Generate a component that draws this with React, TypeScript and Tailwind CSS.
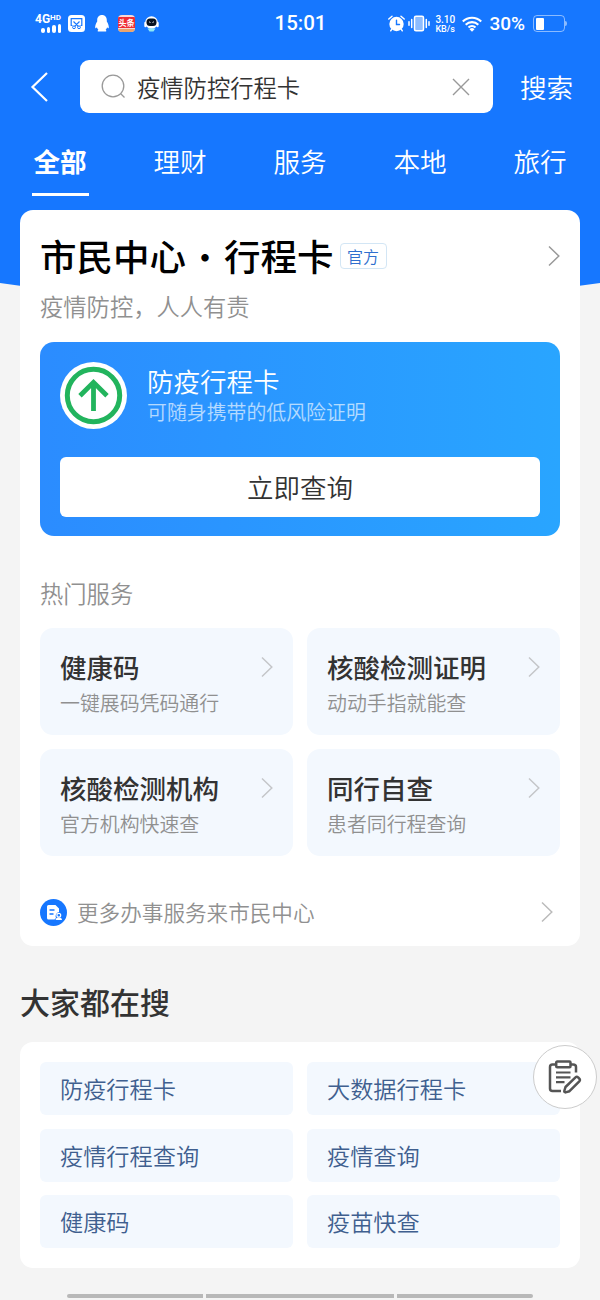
import { clsx } from 'clsx'

const tabs = ['全部', '理财', '服务', '本地', '旅行']

const services = [
  { title: '健康码', desc: '一键展码凭码通行' },
  { title: '核酸检测证明', desc: '动动手指就能查' },
  { title: '核酸检测机构', desc: '官方机构快速查' },
  { title: '同行自查', desc: '患者同行程查询' },
]

const searches = ['防疫行程卡', '大数据行程卡', '疫情行程查询', '疫情查询', '健康码', '疫苗快查']

function Chevron({ className }: { className?: string }) {
  return (
    <svg viewBox="0 0 12 22" className={clsx('h-[22px] w-3 shrink-0', className)} fill="none" stroke="currentColor" strokeWidth="1.5">
      <path d="M1 1.5 10.8 11 1 20.5" />
    </svg>
  )
}

function StatusBar() {
  return (
    <div className="flex h-[47px] items-center justify-between pl-[34px] pr-[33px]">
      <div className="flex w-[220px] items-center">
        <div className="flex w-[28px] flex-col font-['Roboto'] font-bold">
          <div className="flex h-[9px] items-start pl-px">
            <span className="text-[12px] leading-[9px]">4G</span>
            <span className="text-[8px] leading-[6px]">HD</span>
          </div>
          <div className="flex h-[9px] items-end justify-end gap-[2px] pr-[1px]">
            <i className="h-[5px] w-[3.500px] rounded-full bg-white" />
            <i className="h-[6px] w-[3.500px] rounded-full bg-white" />
            <i className="h-[8px] w-[3.500px] rounded-full bg-white" />
            <i className="h-[9px] w-[3.500px] rounded-full bg-white" />
          </div>
        </div>
        {/* screenshot */}
        <svg viewBox="0 0 17 17" className="ml-[6px] size-[17px]" fill="none">
          <rect width="17" height="17" rx="3.5" fill="#fff" />
          <path d="M4.500 10.500H3.200V3.700h10.600v6.800H12.500M5.500 6.500l4.800 4.800M11.500 6.500l-4.800 4.800" stroke="#1677ff" strokeWidth="1.200" />
          <circle cx="6" cy="12.300" r="1.400" stroke="#1677ff" />
          <circle cx="11" cy="12.300" r="1.400" stroke="#1677ff" />
        </svg>
        {/* qq */}
        <svg viewBox="0 0 14 17" className="ml-[10px] h-[17px] w-[14px]" fill="#fff">
          <path d="M7 0C4 0 2.200 2.200 2.200 5v1.500C.8 8.700 0 10.700.2 12.700c.2 1 1 .5 1.700-.5.3 1.200.8 1.900 1.500 2.500-1 .5-1.100 1.900.3 1.900h6.600c1.400 0 1.300-1.400.3-1.900.7-.6 1.200-1.300 1.500-2.500.7 1 1.500 1.500 1.700.5.2-2-.6-4-2-6.200V5C11.800 2.200 10 0 7 0Z" />
        </svg>
        <div className="ml-[9px] flex h-[17px] w-[17px] flex-col justify-between overflow-hidden rounded-[4px] bg-[#f8d9d6] pt-[2px]">
          <span className="h-[11px] whitespace-nowrap bg-[#ee2d35] text-center text-[8px] font-bold leading-[11px]">头条</span>
          <span className="h-[3px] bg-[#eaa46d]" />
        </div>
        <svg viewBox="0 0 15 16" className="ml-[9px] h-[16px] w-[15px]">
          <path d="M1.500 7v3M13.500 7v3" stroke="#fff" strokeWidth="2.400" strokeLinecap="round" />
          <ellipse cx="7.500" cy="6.500" rx="6.300" ry="6.300" fill="#fff" />
          <rect x="2.500" y="2.500" width="10" height="7.500" rx="3.500" fill="#071321" />
          <path d="M5 6.500q.8-1.200 1.500 0M8.500 6.500q.8-1.200 1.500 0" stroke="#fff" strokeWidth=".9" fill="none" />
          <path d="M3.500 12.500h8L9.500 15.500h-4Z" fill="#8ee8f5" />
        </svg>
      </div>
      <span className="font-['Roboto'] text-[20.500px] font-medium leading-none">15:01</span>
      <div className="flex w-[220px] items-center justify-end font-['Roboto']">
        <svg viewBox="0 0 17 17" className="size-[17px]" fill="none" stroke="#fff" strokeLinecap="round">
          <circle cx="8.500" cy="9" r="7.200" fill="#fff" stroke="none" />
          <path d="M.8 4 4 1.300M16.200 4 13 1.300M3.800 14.200 2.700 15.800M13.200 14.200l1.100 1.600" strokeWidth="1.500" />
          <path d="M8.500 5.200v4.300h3" stroke="#1677ff" strokeWidth="1.400" />
        </svg>
        <svg viewBox="0 0 22 17" className="ml-[3px] h-[17px] w-[22px]" fill="none" stroke="#fff" strokeWidth="1.500" strokeLinecap="round">
          <rect x="6.500" y="1.200" width="9" height="14.600" rx="1.500" fill="#8dbcff" />
          <path d="M3.700 4.500v8M1 6.800v3.400M18.300 4.500v8M21 6.800v3.400" />
        </svg>
        <div className="ml-[5px] w-[22px] whitespace-nowrap text-[9px] font-medium">
          <p className="text-[10px] leading-[11px]">3.10</p>
          <p className="leading-[9px]">KB/s</p>
        </div>
        <svg viewBox="0 0 20 16" className="ml-[5px] h-[16px] w-[20px]" fill="none" stroke="#fff" strokeWidth="2.100">
          <path d="M.8 5.600a13 13 0 0 1 18.400 0M3.700 8.700a9 9 0 0 1 12.600 0M6.500 11.600a5 5 0 0 1 7 0" />
          <path d="m10 15.800-2.500-2.600a3.600 3.600 0 0 1 5 0Z" fill="#fff" stroke="none" />
        </svg>
        <span className="ml-[7px] text-[19px] font-medium leading-none">30%</span>
        <div className="ml-[8px] flex h-[17px] w-[32px] shrink-0 items-center rounded-[4px] border border-white/50 p-[2px]">
          <i className="h-[12px] w-[8px] rounded-[1px] bg-white" />
        </div>
        <i className="h-[5px] w-[2px] shrink-0 rounded-r bg-white/50" />
      </div>
    </div>
  )
}

function Header() {
  return (
    <header className="text-white">
      <div className="h-[283px] bg-[#1677ff]">
        <StatusBar />
        <div className="mt-[13px] flex h-[53px] items-center">
          <svg viewBox="0 0 18 30" className="ml-[30px] h-[30px] w-[18px]" fill="none" stroke="#fff" strokeWidth="2.200">
            <path d="M17 1 2.500 15 17 29" />
          </svg>
          <div className="ml-[32px] flex h-[53px] w-[413px] items-center rounded-[9px] bg-white pl-[21px] pr-[23px] text-[#333]">
            <svg viewBox="0 0 26 26" className="size-[26px]" fill="none" stroke="#999" strokeWidth="1.300">
              <circle cx="12" cy="12" r="10.800" />
              <path d="m19.500 19.500 4 4" />
            </svg>
            <span className="ml-[10px] flex-1 pt-[2px] text-[23.300px] leading-none">疫情防控行程卡</span>
            <svg viewBox="0 0 18 18" className="size-[18px]" fill="none" stroke="#999" strokeWidth="1.400">
              <path d="m1 1 16 16M17 1 1 17" />
            </svg>
          </div>
          <span className="ml-[27px] pt-px text-[26.600px] leading-none">搜索</span>
        </div>
        <nav className="flex h-[97px]">
          {tabs.map((tab, i) => (
            <div
              key={tab}
              className={clsx('flex w-[120px] shrink-0 flex-col items-center pt-[34px] text-[26.600px] leading-[28px]', i === 0 && 'font-bold')}
            >
              {tab}
              {i === 0 && <i className="mt-[18px] h-[3px] w-[57px] bg-white" />}
            </div>
          ))}
        </nav>
      </div>
      <svg viewBox="0 0 600 30" className="block h-[30px] w-full" fill="#1677ff">
        <path d="M0 0Q300 44 600 0Z" />
      </svg>
    </header>
  )
}

function TravelCard() {
  return (
    <div className="mt-[22px] h-[194px] rounded-[14px] bg-linear-to-r from-[#2b8cff] to-[#29a5ff] px-5 pt-5">
      <div className="flex h-[67px]">
        <svg viewBox="0 0 67 67" className="size-[67px]" fill="none" stroke="#22b45d">
          <circle cx="33.500" cy="33.500" r="33.500" fill="#fff" stroke="none" />
          <circle cx="33.500" cy="33.500" r="26.200" strokeWidth="5" />
          <path d="M33.500 49V20M20 33.800 33.500 20.300 47 33.800" strokeWidth="4.800" />
        </svg>
        <div className="ml-5 text-white">
          <p className="mt-[4px] text-[26.500px] leading-[30px]">防疫行程卡</p>
          <p className="mt-[4px] text-[19.900px] leading-[24px] text-white/65">可随身携带的低风险证明</p>
        </div>
      </div>
      <button className="mt-[28px] h-[60px] w-full rounded-[6px] bg-white text-[26.500px] leading-[60px] text-[#333]">立即查询</button>
    </div>
  )
}

function EditButton() {
  return (
    <button className="absolute left-[533px] top-[1045px] flex size-[64px] items-center justify-center rounded-full border border-[#ccc] bg-white">
      <svg viewBox="0 0 34 34" className="size-[34px]" fill="none" stroke="#555" strokeWidth="2.500" strokeLinejoin="round">
        <path d="M8 4.500H4.500Q2 4.500 2 7v21.500Q2 31 4.500 31H13M22.500 4.500H25q3 0 3 2.500v5.500" />
        <rect x="8.200" y="1.600" width="14.300" height="5.600" rx="1" />
        <path d="M8 12.500H22.500M8 17.300H22.500M8 22.200H16.500" strokeWidth="2.200" />
        <path d="m17.500 27 10-9.600q1.300-1.200 2.600 0l1.200 1.300q1.200 1.300 0 2.600L21.500 31.200l-4 1.200q-1.300 0-1.200-1.400Z" />
      </svg>
    </button>
  )
}

export default function App() {
  return (
    <div className="relative flex h-[1300px] w-[600px] flex-col overflow-hidden whitespace-nowrap bg-[#f4f4f4] font-['Noto_Sans_CJK_SC',sans-serif] font-[350] text-[#333]">
      <Header />
      <main className="relative -mt-[103px] px-5">
        <section className="h-[736px] rounded-[13px] bg-white px-5 pt-[24px]">
          <div className="flex h-[44px] items-center">
            <h1 className="flex items-center text-[36.500px] font-medium leading-none text-black">
              市民中心
              <span className="w-[38px] text-center text-[32px]">·</span>
              行程卡
            </h1>
            <span className="ml-[6px] flex h-[26px] w-[47px] items-center justify-center rounded-[4px] border border-[#d3e6f5] text-[16px] leading-none text-[#2f6fce]">
              官方
            </span>
            <Chevron className="ml-auto text-[#999]" />
          </div>
          <p className="mt-[14px] text-[23.300px] leading-[28px] text-[#909090]">疫情防控，人人有责</p>
          <TravelCard />
          <h2 className="mt-[43px] text-[23.300px] leading-[28px] font-[350] text-[#909090]">热门服务</h2>
          <div className="mt-[21px] grid grid-cols-2 gap-[14px]">
            {services.map((s) => (
              <div key={s.title} className="h-[107px] rounded-[13px] bg-[#f3f8fe] px-5 pt-[23px]">
                <div className="flex h-[32px] items-center justify-between">
                  <h3 className="text-[26.500px] font-medium leading-[32px]">{s.title}</h3>
                  <Chevron className="text-[#c4c6c9]" />
                </div>
                <p className="mt-[8px] text-[19.900px] leading-[24px] text-[#909090]">{s.desc}</p>
              </div>
            ))}
          </div>
          <div className="mt-[42px] flex h-[28px] items-center pr-[7px]">
            <svg viewBox="0 0 27 27" className="size-[27px]">
              <circle cx="13.500" cy="13.500" r="13.500" fill="#1677ff" />
              <path d="M8.500 6h7l3.500 3.500V13a4.200 4.200 0 0 0-3 6l-1.500 1.500h-6Q7 20.500 7 19V7.500Q7 6 8.500 6Z" fill="#fff" />
              <path d="M9.500 11h5M9.500 15h4" stroke="#1677ff" strokeWidth="1.300" />
              <circle cx="18.800" cy="16.300" r="1.900" fill="none" stroke="#fff" strokeWidth="1.200" />
              <path d="M15.500 21q.3-2.300 2.300-2.500h2q2 .2 2.300 2.500Z" fill="#fff" />
            </svg>
            <span className="ml-[10px] text-[21.600px] leading-none text-[#909090]">更多办事服务来市民中心</span>
            <Chevron className="ml-auto text-[#bbb]" />
          </div>
        </section>

        <h2 className="mt-[35px] text-[30px] font-medium leading-[40px]">大家都在搜</h2>
        <section className="mt-[21px] grid h-[226px] grid-cols-2 content-start gap-x-[14px] gap-y-[13.300px] rounded-[13px] bg-white p-5">
          {searches.map((word) => (
            <div key={word} className="h-[53.300px] rounded-[6px] bg-[#f3f8fe] px-5 text-[23.200px] leading-[53.300px] text-[#3f5f8f]">
              {word}
            </div>
          ))}
        </section>
      </main>
      <EditButton />
      <div className="mt-auto flex justify-center gap-[3px] pb-[2px]">
        <i className="h-[4px] w-[136px] rounded-l-full bg-[#b8b8b8]" />
        <i className="h-[4px] w-[188px] bg-[#b8b8b8]" />
        <i className="h-[4px] w-[136px] rounded-r-full bg-[#b8b8b8]" />
      </div>
    </div>
  )
}
